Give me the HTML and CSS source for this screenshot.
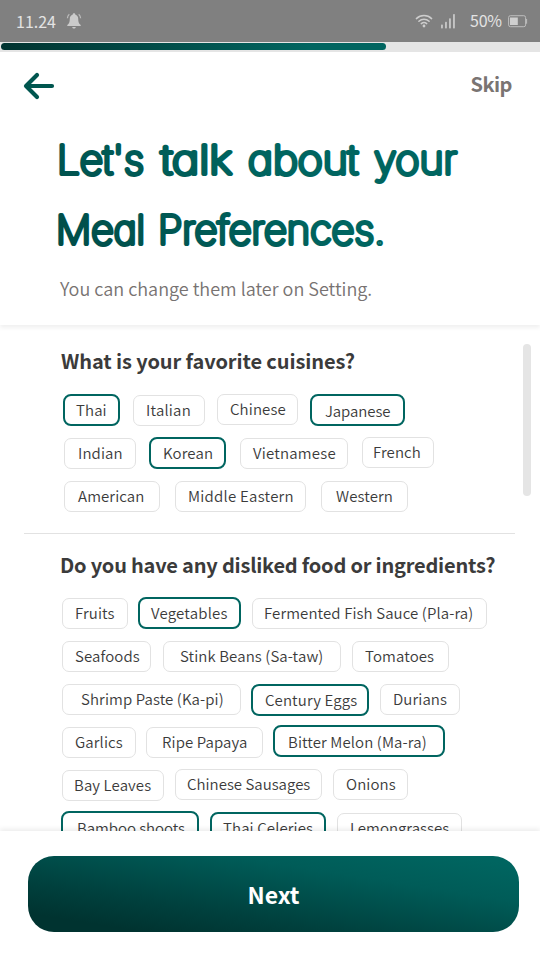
FILE: index.html
```html
<!DOCTYPE html>
<html lang="en">
<head>
<meta charset="utf-8">
<title>Meal Preferences</title>
<link rel="stylesheet" href="styles.css">
</head>
<body>
<div class="app">
  <div class="status">
    <span class="time">11.24</span>
    <svg class="bell" width="16" height="18" viewBox="0 0 16 18"><path d="M8 1.2c.8 0 1.200.5 1.200 1.200 2 .6 3 2.300 3 4.300 0 3.500.8 4.800 2.500 6.300v1.100H1.300V13c1.700-1.500 2.500-2.800 2.500-6.300 0-2 1-3.700 3-4.300 0-.7.4-1.200 1.200-1.200zM6.200 15h3.600c-.2 1-.9 1.600-1.800 1.600S6.400 16 6.200 15z" fill="#cbcbcb"/><path d="M3.300 2.300C2.200 3.200 1.500 4.500 1.400 6.200M12.700 2.300c1.100.9 1.800 2.200 1.900 3.900" fill="none" stroke="#bcbcbc" stroke-width="1.200"/></svg>
    <svg class="wifi" width="18" height="14" viewBox="0 0 18 14"><g fill="none" stroke="#cdcdcd" stroke-width="1.500" stroke-linecap="round"><path d="M1.400 4.600C5.600.6 12.400.6 16.600 4.600"/><path d="M3.900 7.200c2.900-2.700 7.300-2.700 10.200 0"/><path d="M6.300 9.600c1.600-1.400 3.800-1.400 5.400 0"/></g><circle cx="9" cy="12" r="1.400" fill="#cdcdcd"/></svg>
    <svg class="signal" width="14" height="15" viewBox="0 0 14 15" fill="#c4c4c4"><rect x="0" y="10.500" width="1.900" height="4" rx=".7"/><rect x="4" y="7.700" width="1.900" height="6.800" rx=".7"/><rect x="8" y="4.300" width="1.900" height="10.200" rx=".7"/><rect x="12" y="0" width="1.900" height="14.500" rx=".7"/></svg>
    <span class="pct">50%</span>
    <svg class="battery" width="20" height="13" viewBox="0 0 20 13"><rect x=".6" y=".7" width="17" height="11" rx="1.800" fill="none" stroke="#bdbdbd"/><rect x="2" y="2.500" width="7.800" height="7.500" fill="#cfcfcf"/><path d="M18.600 4v4.700" stroke="#bdbdbd"/></svg>
  </div>
  <div class="progress"><div class="bar"></div></div>
  <header class="header">
    <nav class="nav">
      <svg width="32" height="28" viewBox="0 0 32 28"><path d="M14 3 3 14l11 11M3.500 14H29" fill="none" stroke="#00564f" stroke-width="4.200" stroke-linecap="round" stroke-linejoin="round"/></svg>
      <span class="skip">Skip</span>
    </nav>
    <h1 class="title">
      <svg width="420" height="124" viewBox="50 136 420 124">
        <defs><linearGradient id="teal" gradientUnits="userSpaceOnUse" x1="58" y1="250" x2="200" y2="100"><stop offset="0" stop-color="#004c48"/><stop offset="1" stop-color="#006560"/></linearGradient></defs>
        <g class="letters">
          <text x="57" y="174" textLength="87" lengthAdjust="spacingAndGlyphs">Let's</text>
          <text x="161" y="174" textLength="71" lengthAdjust="spacingAndGlyphs">talk</text>
          <text x="248" y="174" textLength="110" lengthAdjust="spacingAndGlyphs">about</text>
          <text x="374" y="174" textLength="83" lengthAdjust="spacingAndGlyphs">your</text>
          <text x="56" y="244" textLength="89" lengthAdjust="spacingAndGlyphs">Meal</text>
          <text x="158" y="244" textLength="227" lengthAdjust="spacingAndGlyphs">Preferences.</text>
        </g>
      </svg>
    </h1>
    <p class="sub">You can change them later on Setting.</p>
  </header>
  <main class="content">
    <section class="cuisines">
      <h2>What is your favorite cuisines?</h2>
      <div class="row"><span class="chip on thai">Thai</span><span class="chip low italian">Italian</span><span class="chip chinese">Chinese</span><span class="chip on japanese">Japanese</span></div>
      <div class="row"><span class="chip low indian">Indian</span><span class="chip on korean">Korean</span><span class="chip low vietnamese">Vietnamese</span><span class="chip french">French</span></div>
      <div class="row"><span class="chip low american">American</span><span class="chip low eastern">Middle Eastern</span><span class="chip low western">Western</span></div>
    </section>
    <section class="dislikes">
      <h2>Do you have any disliked food or ingredients?</h2>
      <div class="row"><span class="chip low fruits">Fruits</span><span class="chip on vegetables">Vegetables</span><span class="chip low fish">Fermented Fish Sauce (Pla-ra)</span></div>
      <div class="row"><span class="chip low seafoods">Seafoods</span><span class="chip low stink">Stink Beans (Sa-taw)</span><span class="chip low tomatoes">Tomatoes</span></div>
      <div class="row"><span class="chip low shrimp">Shrimp Paste (Ka-pi)</span><span class="chip on eggs">Century Eggs</span><span class="chip low durians">Durians</span></div>
      <div class="row"><span class="chip low garlics">Garlics</span><span class="chip low papaya">Ripe Papaya</span><span class="chip on high melon">Bitter Melon (Ma-ra)</span></div>
      <div class="row"><span class="chip low bay">Bay Leaves</span><span class="chip sausages">Chinese Sausages</span><span class="chip onions">Onions</span></div>
      <div class="row"><span class="chip on high bamboo">Bamboo shoots</span><span class="chip on celeries">Thai Celeries</span><span class="chip low lemongrass">Lemongrasses</span></div>
    </section>
    <div class="scrollbar"></div>
  </main>
  <footer class="footer"><button class="next">Next</button></footer>
</div>
</body>
</html>
```

FILE: styles.css
```css
* { box-sizing: border-box; }
body { margin: 0; background: #fff; color: #3b3b3b; font-family: "Noto Sans CJK SC", sans-serif; }
.app { width: 540px; height: 960px; display: flex; flex-direction: column; overflow: hidden; background: #fff; }
.status { flex: none; height: 42px; background: #808080; color: #e3e3e3; display: flex; align-items: center; padding: 0 12px 0 16px; font-size: 16px; font-weight: 400; }
.time { width: 50px; font-size: 16px; }
.wifi { margin-left: auto; margin-right: 8px; }
.signal { margin-right: 15px; }
.pct { width: 38px; padding-bottom: 3px; letter-spacing: -.2px; }
.progress { flex: none; height: 10px; background: #e5e5e5; padding: 1px 0 0 1px; }
.bar { width: 385px; height: 7px; border-radius: 4px; background: linear-gradient(90deg, #003330, #006560 80%); }
.header { flex: none; height: 273px; position: relative; z-index: 2; background: #fff; box-shadow: 0 3px 4px rgba(0,0,0,.06); }
.nav { display: flex; justify-content: space-between; align-items: center; height: 68px; padding: 0 28px 0 23px; }
.skip { font-size: 20px; font-weight: 700; color: #7a7472; line-height: 30px; margin-top: -5px; letter-spacing: -.5px; }
.title { margin: 16px 0 0 50px; height: 124px; line-height: 0; }
.letters { font-family: Inter, sans-serif; font-size: 39px; font-weight: 100; font-feature-settings: "cv11"; fill: url(#teal); stroke: url(#teal); stroke-width: 4.2px; stroke-linejoin: round; }
.sub { margin: 13px 0 0 60px; font-size: 18px; line-height: 30px; font-weight: 350; color: #777271; white-space: nowrap; }
.content { flex: none; height: 506px; position: relative; overflow: hidden; }
h2 { margin: 0; font-size: 20px; line-height: 30px; font-weight: 700; white-space: nowrap; letter-spacing: -.1px; }
.cuisines { height: 208px; padding: 21px 0 0 61px; }
.cuisines h2 { height: 48px; }
.dislikes { margin-left: 24px; width: 491px; border-top: 1px solid #e2e2e2; padding: 16px 0 0 36px; }
.dislikes h2 { height: 47px; letter-spacing: -.21px; }
.row { display: flex; align-items: flex-start; height: 43px; }
.chip { flex: none; height: 31px; border: 1px solid #e2e2e2; border-radius: 7px; font-size: 15px; font-weight: 350; line-height: 28px; white-space: nowrap; padding-left: 12px; letter-spacing: .1px; }
.low { margin-top: 1px; line-height: 27px; }
.high { margin-top: -1px; }
.on { height: 32px; border: 2px solid #006560; border-radius: 8px; padding-left: 11px; line-height: 27px; }
.thai { width: 57px; margin-left: 2px; }
.italian { width: 72px; margin-left: 13px; letter-spacing: .2px; }
.chinese { width: 81px; margin-left: 12px; }
.japanese { width: 95px; margin-left: 12px; padding-left: 13px; line-height: 29px; letter-spacing: -.1px; }
.indian { width: 72px; margin-left: 3px; padding-left: 13px; }
.korean { width: 77px; margin-left: 13px; padding-left: 12px; }
.vietnamese { width: 108px; margin-left: 14px; letter-spacing: .2px; }
.french { width: 72px; margin-left: 14px; padding-left: 10px; }
.american { width: 96px; margin-left: 3px; padding-left: 13px; }
.eastern { width: 131px; margin-left: 15px; letter-spacing: .25px; line-height: 28px; }
.western { width: 87px; margin-left: 15px; padding-left: 14px; line-height: 28px; }
.fruits { width: 66px; margin-left: 2px; line-height: 28px; }
.vegetables { width: 103px; margin-left: 10px; line-height: 28px; letter-spacing: .2px; }
.fish { width: 235px; margin-left: 11px; padding-left: 11px; }
.seafoods { width: 89px; margin-left: 2px; }
.stink { width: 178px; margin-left: 12px; padding-left: 16px; }
.tomatoes { width: 97px; margin-left: 11px; }
.shrimp { width: 179px; margin-left: 2px; padding-left: 18px; }
.eggs { width: 118px; margin-left: 10px; padding-left: 12px; margin-top: 1px; }
.durians { width: 80px; margin-left: 11px; }
.garlics { width: 74px; margin-left: 2px; }
.papaya { width: 117px; margin-left: 10px; padding-left: 15px; }
.melon { width: 172px; margin-left: 10px; padding-left: 13px; line-height: 29px; }
.bay { width: 102px; margin-left: 2px; padding-left: 11px; }
.sausages { width: 147px; margin-left: 11px; padding-left: 11px; letter-spacing: 0; }
.onions { width: 75px; margin-left: 11px; }
.bamboo { width: 138px; margin-left: 1px; padding-left: 14px; letter-spacing: -.05px; line-height: 29px; }
.celeries { width: 116px; margin-left: 11px; }
.lemongrass { width: 125px; margin-left: 11px; letter-spacing: 0; }
.scrollbar { position: absolute; left: 523px; top: 19px; width: 8px; height: 152px; border-radius: 4px; background: #e5e5e5; }
.footer { flex: none; height: 129px; position: relative; z-index: 2; background: #fff; box-shadow: 0 -2px 5px rgba(0,0,0,.08); padding: 25px 21px 0 28px; }
.next { display: block; width: 491px; height: 76px; border: 0; border-radius: 26px; color: #fff; font: 700 23px/75px "Noto Sans CJK SC", sans-serif; background: linear-gradient(9deg, #003330 12%, #00403d 32%, #005c58 70%, #006560 94%); }
```
